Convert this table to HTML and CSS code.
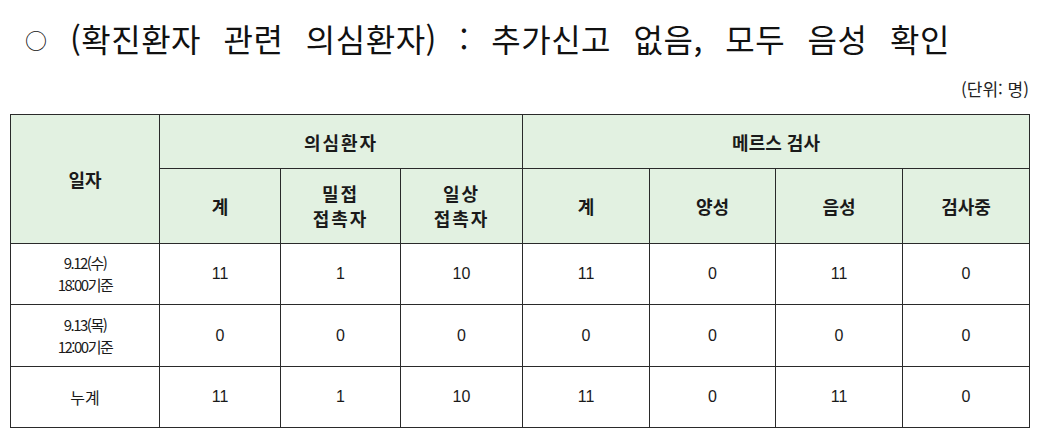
FILE: index.html
```html
<!DOCTYPE html>
<html lang="ko">
<head>
<meta charset="utf-8">
<link rel="stylesheet" href="styles.css">
</head>
<body>
<div class="page">
  <h1 class="title"><span class="bullet">○</span> (확진환자 관련 의심환자) : 추가신고 없음, 모두 음성 확인</h1>
  <div class="unit">(단위: 명)</div>
  <table class="stats">
    <colgroup>
      <col style="width:149px"><col style="width:121px"><col style="width:120px"><col style="width:122px">
      <col style="width:127px"><col style="width:126px"><col style="width:127px"><col style="width:127px">
    </colgroup>
    <thead>
      <tr class="h1">
        <th rowspan="2">일자</th>
        <th colspan="3" class="wide">의심환자</th>
        <th colspan="4">메르스 검사</th>
      </tr>
      <tr class="h2">
        <th>계</th>
        <th class="two">밀접<br>접촉자</th>
        <th class="two">일상<br>접촉자</th>
        <th>계</th>
        <th>양성</th>
        <th>음성</th>
        <th>검사중</th>
      </tr>
    </thead>
    <tbody>
      <tr class="r1">
        <td class="date">9.12(수)<br>18:00기준</td>
        <td>11</td><td>1</td><td>10</td><td>11</td><td>0</td><td>11</td><td>0</td>
      </tr>
      <tr class="r2">
        <td class="date">9.13(목)<br>12:00기준</td>
        <td>0</td><td>0</td><td>0</td><td>0</td><td>0</td><td>0</td><td>0</td>
      </tr>
      <tr class="r3">
        <td class="kr">누계</td>
        <td>11</td><td>1</td><td>10</td><td>11</td><td>0</td><td>11</td><td>0</td>
      </tr>
    </tbody>
  </table>
</div>
</body>
</html>
```

FILE: styles.css
```css
html, body {
  margin: 0;
  padding: 0;
  background: #ffffff;
}
body {
  font-family: "Noto Sans CJK KR", "Noto Sans", sans-serif;
  color: #111111;
}
.page {
  padding: 18px 13px 0 10px;
}
.title {
  margin: 0 0 0 15px;
  font-size: 32px;
  font-weight: 400;
  line-height: 40px;
  letter-spacing: 0.5px;
  word-spacing: 13px;
  color: #111111;
  white-space: nowrap;
}
.bullet {
  font-size: 22px;
  vertical-align: 3px;
}
.unit {
  margin-top: 19px;
  text-align: right;
  font-size: 17px;
  line-height: 22px;
  color: #222222;
}
.stats {
  margin-top: 14px;
  border-collapse: collapse;
  table-layout: fixed;
  width: 1019px;
}
.stats th, .stats td {
  border: 1.5px solid #2a2a2a;
  padding: 0;
  text-align: center;
  vertical-align: middle;
}
.stats th {
  background: #e2f1e1;
  font-weight: 700;
  font-size: 18px;
  line-height: 22px;
  color: #1a1a1a;
}
.stats .wide {
  letter-spacing: 2px;
}
.stats .two {
  letter-spacing: 2px;
  line-height: 25px;
}
.h1 { height: 54px; }
.h2 { height: 75px; }
.r1 { height: 61px; }
.r2 { height: 62px; }
.r3 { height: 61px; }
.stats td {
  font-family: "Liberation Sans", Arial, sans-serif;
  font-size: 16px;
  color: #1a1a1a;
}
.stats td.date {
  font-family: "Noto Sans CJK KR", sans-serif;
  font-size: 15px;
  line-height: 22px;
  letter-spacing: -1.5px;
}
.stats td.kr {
  font-family: "Noto Sans CJK KR", sans-serif;
  font-size: 16px;
}
```
